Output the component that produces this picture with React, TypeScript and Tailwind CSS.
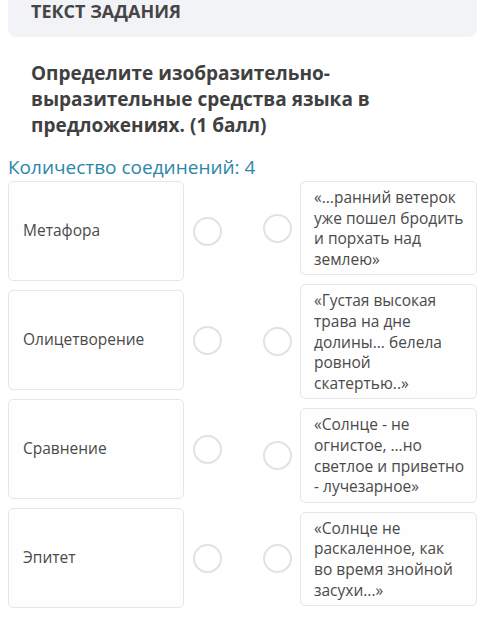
import React from 'react'

const left = ['Метафора', 'Олицетворение', 'Сравнение', 'Эпитет']

const right = [
  '«...ранний ветерок уже пошел бродить и порхать над землею»',
  '«Густая высокая трава на дне долины... белела ровной скатертью..»',
  '«Солнце - не огнистое, ...но светлое и приветно - лучезарное»',
  '«Солнце не раскаленное, как во время знойной засухи...»',
]

function Dot() {
  return <div className="h-[29px] w-[29px] shrink-0 rounded-full border-2 border-[#e2e2e2] bg-white" />
}

export default function App() {
  return (
    <div
      className="min-h-[618px] w-[500px] bg-white px-2 text-[#454545]"
      style={{ fontFamily: '"Open Sans", "Noto Sans", sans-serif' }}
    >
      {/* Task header */}
      <div className="h-[37px] w-[469px] rounded-b-lg bg-[#f2f3f6] pl-[23px] pt-[1px]">
        <div className="text-[18px] font-bold leading-[21px] text-[#454545]">ТЕКСТ ЗАДАНИЯ</div>
      </div>

      <div className="mt-[23px] pl-[23px] pr-[40px] text-[19px] font-bold leading-[26px] text-[#404040]">
        Определите изобразительно-выразительные средства языка в предложениях. (1 балл)
      </div>

      <div className="mt-[17px] text-[19px] leading-[24px] text-[#2c86a8]">Количество соединений: 4</div>

      <div className="mt-[2px] flex">
        {/* Left column */}
        <div className="flex flex-col gap-[9px]">
          {left.map((t) => (
            <div key={t} className="flex items-center">
              <div className="flex h-[100px] w-[176px] items-center rounded-[5px] border border-[#e6e6e6] bg-[#fefefe] pl-[14px] text-[15.5px] text-[#4a4a4a]">
                {t}
              </div>
              <div className="ml-[9px]">
                <Dot />
              </div>
            </div>
          ))}
        </div>

        {/* Right column */}
        <div className="ml-[41px] flex flex-col gap-[9px]">
          {right.map((t) => (
            <div key={t} className="flex items-center">
              <Dot />
              <div className="ml-[8px] w-[177px] rounded-[5px] border border-[#e6e6e6] bg-[#fefefe] py-[5px] pl-[13px] pr-[10px] text-[15.5px] leading-[20.6px] text-[#4a4a4a]">
                {t}
              </div>
            </div>
          ))}
        </div>
      </div>
    </div>
  )
}
